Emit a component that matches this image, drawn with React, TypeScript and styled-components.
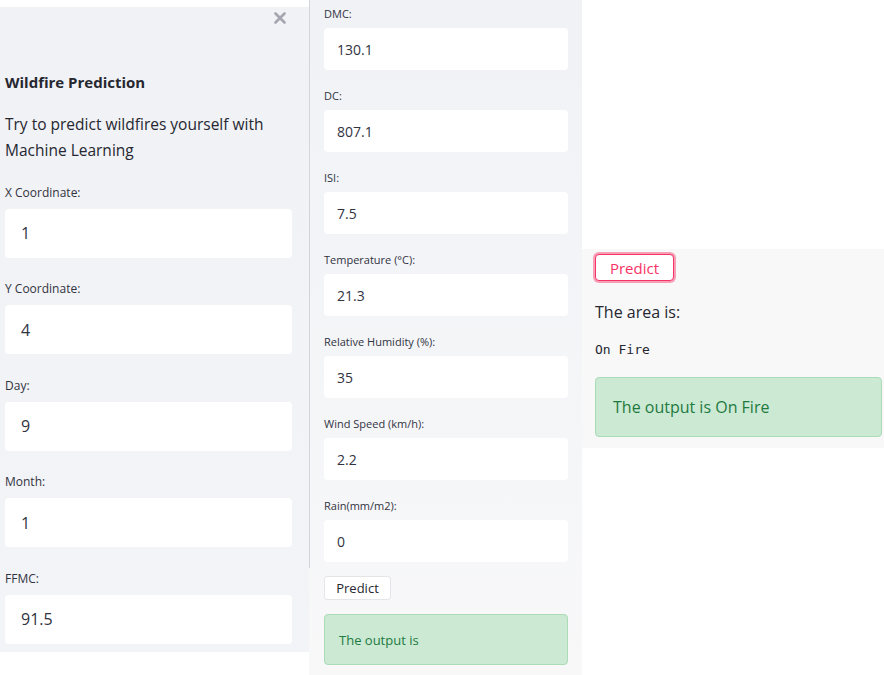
import React from "react";
import styled, { createGlobalStyle } from "styled-components";

const GlobalStyle = createGlobalStyle`
  html, body { margin: 0; padding: 0; background: #ffffff; }
  body {
    font-family: "Open Sans", "Noto Sans", sans-serif;
    color: #262730;
    width: 884px;
    height: 675px;
    overflow: hidden;
  }
  * { box-sizing: border-box; }
`;

const Page = styled.div`
  display: flex;
  align-items: flex-start;
  width: 884px;
  height: 675px;
`;

const Sidebar = styled.aside`
  width: 309px;
  height: 645px;
  margin-top: 7px;
  padding: 5px 17px 0 5px;
  display: flex;
  flex-direction: column;
  background: linear-gradient(to bottom, #f0f2f6, #f3f4f7);
`;

const CloseButton = styled.button`
  align-self: flex-end;
  margin-right: 6px;
  width: 12px;
  height: 12px;
  padding: 0;
  border: none;
  background: none;
  display: flex;
  cursor: pointer;
`;

const Title = styled.h2`
  margin: 48px 0 0;
  font-size: 15px;
  line-height: 20px;
  font-weight: 700;
  color: #262730;
`;

const Description = styled.p`
  margin: 19px 0 0;
  font-size: 15.5px;
  line-height: 26px;
  color: #262730;
`;

const SideField = styled.div`
  margin-top: 23.5px;
  display: flex;
  flex-direction: column;
  &:first-of-type { margin-top: 21.5px; }
`;

const SideLabel = styled.label`
  font-size: 12px;
  line-height: 16px;
  margin-bottom: 8px;
  color: #31333f;
`;

const SideInput = styled.div`
  height: 49px;
  background: #ffffff;
  border-radius: 4px;
  padding-left: 16px;
  display: flex;
  align-items: center;
  font-size: 16px;
  color: #31333f;
`;

const Middle = styled.main`
  width: 273px;
  height: 675px;
  padding: 7px 14px 0 15px;
  display: flex;
  flex-direction: column;
  background:
    linear-gradient(#d3d5da, #d3d5da) no-repeat left top / 1px 568px,
    linear-gradient(to bottom, #f0f2f6, #f8f8f9);
`;

const MidField = styled.div`
  display: flex;
  flex-direction: column;
  margin-bottom: 19px;
`;

const MidLabel = styled.label`
  font-size: 11px;
  line-height: 14px;
  margin-bottom: 7px;
  color: #31333f;
`;

const MidInput = styled.div`
  height: 42px;
  background: #ffffff;
  border-radius: 4px;
  padding-left: 13px;
  display: flex;
  align-items: center;
  font-size: 14px;
  color: #31333f;
`;

const SmallButton = styled.button`
  align-self: flex-start;
  margin-top: -5px;
  width: 67px;
  height: 24px;
  padding: 0;
  background: #ffffff;
  border: 1px solid #e4e5e9;
  border-radius: 3px;
  font-family: inherit;
  font-size: 13px;
  color: #262730;
`;

const Alert = styled.div<{ $big?: boolean }>`
  height: ${(p) => (p.$big ? 60 : 51)}px;
  display: flex;
  align-items: center;
  padding-left: ${(p) => (p.$big ? 17 : 14)}px;
  background: #cbe9d3;
  border: 1px solid #abdcb8;
  border-radius: 4px;
  color: #1f7a3f;
  font-size: ${(p) => (p.$big ? 16 : 13)}px;
`;

const MidAlert = styled(Alert)`
  margin-top: 14px;
`;

const RightCol = styled.section`
  flex: 1;
  padding-top: 249px;
  display: flex;
  flex-direction: column;
`;

const Panel = styled.div`
  height: 199px;
  background: #f8f8f9;
  padding: 5px 2px 0 13px;
  display: flex;
  flex-direction: column;
`;

const PrimaryButton = styled.button`
  align-self: flex-start;
  width: 79px;
  height: 27px;
  padding: 0;
  background: #ffffff;
  border: 1px solid #f63366;
  border-radius: 4px;
  box-shadow: 0 0 0 2px rgba(246, 51, 102, 0.45);
  font-family: inherit;
  font-size: 15px;
  color: #f63366;
`;

const AreaText = styled.p`
  margin: 19px 0 0;
  font-size: 16px;
  line-height: 24px;
  color: #262730;
`;

const Code = styled.pre`
  margin: 17px 0 0;
  font-family: "DejaVu Sans Mono", "Liberation Mono", monospace;
  font-size: 13px;
  line-height: 18px;
  color: #262730;
`;

const RightAlert = styled(Alert)`
  margin-top: 18px;
`;

const sideFields = [
  { label: "X Coordinate:", value: "1" },
  { label: "Y Coordinate:", value: "4" },
  { label: "Day:", value: "9" },
  { label: "Month:", value: "1" },
  { label: "FFMC:", value: "91.5" },
];

const midFields = [
  { label: "DMC:", value: "130.1" },
  { label: "DC:", value: "807.1" },
  { label: "ISI:", value: "7.5" },
  { label: "Temperature (°C):", value: "21.3" },
  { label: "Relative Humidity (%):", value: "35" },
  { label: "Wind Speed (km/h):", value: "2.2" },
  { label: "Rain(mm/m2):", value: "0" },
];

export default function App() {
  return (
    <>
      <GlobalStyle />
      <Page>
        <Sidebar>
          <CloseButton aria-label="Close">
            <svg width="12" height="12" viewBox="0 0 12 12">
              <path d="M1.5 1.5 L10.5 10.5 M10.5 1.5 L1.5 10.5" stroke="#a3a6ae" strokeWidth="2.6" strokeLinecap="round" />
            </svg>
          </CloseButton>
          <Title>Wildfire Prediction</Title>
          <Description>
            Try to predict wildfires yourself with
            <br />
            Machine Learning
          </Description>
          {sideFields.map((f) => (
            <SideField key={f.label}>
              <SideLabel>{f.label}</SideLabel>
              <SideInput>{f.value}</SideInput>
            </SideField>
          ))}
        </Sidebar>
        <Middle>
          {midFields.map((f) => (
            <MidField key={f.label}>
              <MidLabel>{f.label}</MidLabel>
              <MidInput>{f.value}</MidInput>
            </MidField>
          ))}
          <SmallButton>Predict</SmallButton>
          <MidAlert>The output is</MidAlert>
        </Middle>
        <RightCol>
          <Panel>
            <PrimaryButton>Predict</PrimaryButton>
            <AreaText>The area is:</AreaText>
            <Code>On Fire</Code>
            <RightAlert $big>The output is On Fire</RightAlert>
          </Panel>
        </RightCol>
      </Page>
    </>
  );
}
